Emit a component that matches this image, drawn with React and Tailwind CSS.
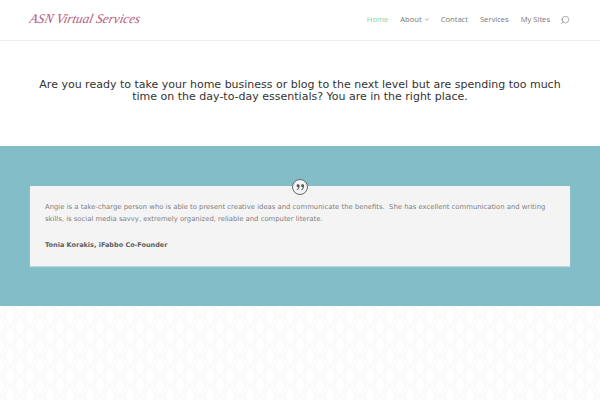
import React from 'react';
import { Search } from 'lucide-react';

const links = ['Contact', 'Services', 'My Sites'];

// Faint diamond wallpaper at the bottom of the page
function Wallpaper() {
  return (
    <svg className="w-full h-full block" aria-hidden="true">
      <defs>
        <pattern id="drops" width="20" height="20" patternUnits="userSpaceOnUse">
          <rect width="20" height="20" fill="#fcfcfc" />
          {[[10, 0], [0, -10], [20, -10], [0, 10], [20, 10]].map(([x, y]) => (
            <path key={`${x}-${y}`} d={`M${x} ${y}` + 'c2 4 5 7 5 10c0 3 -3 6 -5 10c-2 -4 -5 -7 -5 -10c0 -3 3 -6 5 -10z'} fill="#ffffff" stroke="#faf9fa" strokeWidth="1" />
          ))}
        </pattern>
      </defs>
      <rect width="100%" height="100%" fill="url(#drops)" />
    </svg>
  );
}

function QuoteBadge() {
  return (
    <div className="absolute -top-[7px] left-1/2 -ml-[8px] w-[16px] h-[16px] rounded-full bg-[#f4f4f4] border-[1.5px] border-[#666] flex items-center justify-center">
      <svg width="9" height="7" viewBox="0 0 10 8" fill="#555">
        <circle cx="2.2" cy="2" r="1.7" />
        <path d="M3.9 2C3.9 4.5 2.8 6 1 7L.7 6.3C1.8 5.6 2.5 4.5 2.5 3Z" />
        <circle cx="7.4" cy="2" r="1.7" />
        <path d="M9.1 2C9.1 4.5 8 6 6.2 7L5.9 6.3C7 5.6 7.7 4.5 7.7 3Z" />
      </svg>
    </div>
  );
}

export default function App() {
  return (
    <div className="h-[400px] overflow-hidden flex flex-col bg-white font-['Open_Sans',sans-serif]">
      {/* Header */}
      <header className="h-[41px] shrink-0 border-b border-[#eeeeee] flex items-center justify-between pl-[30px] pr-[30px]">
        <a className="font-['Liberation_Serif',serif] italic text-[13.2px] leading-none text-[#b85a7c] -skew-x-12 -translate-y-px">
          ASN Virtual Services
        </a>
        <nav className="flex items-center text-[7.6px] text-[#777777]">
          <span className="text-[#8fcf9f] mr-[12px]">Home</span>
          <span className="mr-[12px] flex items-center">
            About
            <svg className="ml-[3px]" width="4" height="3" viewBox="0 0 4 3" fill="none" stroke="#999" strokeWidth="0.8">
              <path d="M.5 .5L2 2.3L3.5 .5" />
            </svg>
          </span>
          {links.map((l) => (
            <span key={l} className="mr-[12px]">{l}</span>
          ))}
          <Search className="w-[10px] h-[10px] -ml-[2px] -scale-x-100 text-[#666]" strokeWidth={1.25} />
        </nav>
      </header>

      {/* Intro */}
      <section className="h-[105px] shrink-0 flex items-start justify-center pt-[38px]">
        <h2 className="w-[540px] text-center font-['DejaVu_Sans',sans-serif] text-[11px] leading-[12px] text-[#333333]">
          Are you ready to take your home business or blog to the next level but are spending too much time on the day-to-day essentials? You are in the right place.
        </h2>
      </section>

      {/* Testimonial */}
      <section className="h-[160px] shrink-0 bg-[#83bec8] px-[30px] pt-[40px]">
        <div className="relative h-[80px] bg-[#f4f4f4] pt-[16px] px-[15px] shadow-[0_1px_1px_rgba(255,255,255,0.4)]">
          <QuoteBadge />
          <p className="text-[6.85px] leading-[11.5px] text-[#808080] font-['DejaVu_Sans',sans-serif]">
            Angie is a take-charge person who is able to present creative ideas and communicate the benefits.&nbsp; She has excellent communication and writing skills, is social media savvy, extremely organized, reliable and computer literate.
          </p>
          <p className="mt-[15px] text-[6.5px] leading-[11px] font-bold text-[#5f5f5f] font-['DejaVu_Sans',sans-serif]">
            Tonia Korakis, iFabbo Co-Founder
          </p>
        </div>
      </section>

      <section className="flex-1 min-h-0">
        <Wallpaper />
      </section>
    </div>
  );
}
